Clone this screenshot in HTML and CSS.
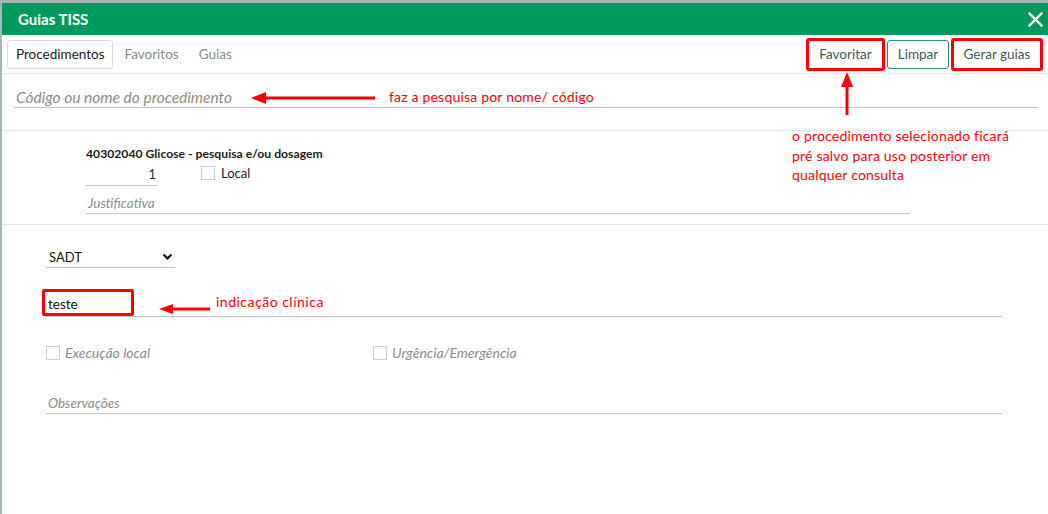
FILE: index.html
```html
<!DOCTYPE html>
<html lang="pt-BR">
<head>
    <meta charset="UTF-8">
    <title>Guias TISS</title>
    <link rel="stylesheet" href="styles.css">
</head>
<body>
    <div class="dialog">
        <div class="dialog-header">
            <span class="dialog-title">Guias TISS</span>
            <svg class="close" width="15" height="15" viewBox="0 0 15 15"><path d="M1.5 1.5 L13.5 13.5 M13.5 1.5 L1.5 13.5" stroke="#fff" stroke-width="2.4" stroke-linecap="square"/></svg>
        </div>

        <div class="toolbar">
            <div class="tabs">
                <span class="tab active">Procedimentos</span>
                <span class="tab">Favoritos</span>
                <span class="tab">Guias</span>
            </div>
            <div class="actions">
                <button class="btn marked btn-fav">Favoritar</button>
                <button class="btn btn-clear">Limpar</button>
                <button class="btn marked btn-gen">Gerar guias</button>
            </div>
        </div>

        <div class="section search">
            <div class="field"><span class="placeholder">Código ou nome do procedimento</span></div>
        </div>

        <div class="section items">
            <div class="item">
                <div class="item-name">40302040 Glicose - pesquisa e/ou dosagem</div>
                <div class="item-row">
                    <div class="qty">1</div>
                    <label class="check"><span class="box"></span>Local</label>
                </div>
                <div class="field justify"><span class="placeholder">Justificativa</span></div>
            </div>
        </div>

        <div class="guide">
            <div class="select">
                <span>SADT</span>
                <svg width="11" height="8" viewBox="0 0 11 8"><path d="M1.5 1.5 L5.5 5.5 L9.5 1.5" fill="none" stroke="#111" stroke-width="2.2"/></svg>
            </div>
            <div class="field indication">
                <span class="value">teste</span>
                <span class="mark-box"></span>
            </div>
            <div class="checks">
                <label class="check muted"><span class="box"></span>Execução local</label>
                <label class="check muted"><span class="box"></span>Urgência/Emergência</label>
            </div>
            <div class="field obs"><span class="placeholder">Observações</span></div>
        </div>
    </div>

    <svg class="arrows" width="1048" height="514" viewBox="0 0 1048 514">
        <line x1="264" y1="98" x2="375" y2="98" stroke="#f00" stroke-width="3"/>
        <polygon points="251,98 266,92 266,104" fill="#f00"/>
        <line x1="847" y1="86" x2="847" y2="115" stroke="#f00" stroke-width="3"/>
        <polygon points="847,72 841,87 853,87" fill="#f00"/>
        <line x1="172" y1="309" x2="210" y2="309" stroke="#f00" stroke-width="3"/>
        <polygon points="159,309 173,304 173,314" fill="#f00"/>
    </svg>
    <div class="note note-search">faz a pesquisa por nome/ código</div>
    <div class="note note-fav">o procedimento selecionado ficará<br>pré salvo para uso posterior em<br>qualquer consulta</div>
    <div class="note note-ind">indicação clínica</div>
</body>
</html>
```

FILE: styles.css
```css
* { box-sizing: border-box; }
body { margin: 0; background: #a3b7b4; font-family: Lato, 'Open Sans', sans-serif; color: #333; position: relative; height: 514px; overflow: hidden; }
.dialog { margin: 3px 0 0 2px; background: #fff; height: 511px; }
.dialog-header { height: 32px; background: #009a5e; display: flex; align-items: center; justify-content: space-between; padding: 0 5px 0 16px; }
.dialog-title { color: #fff; font-size: 15px; font-weight: 700; }
.close { margin-top: 1px; }

.toolbar { height: 39px; border-bottom: 1px solid #e6e6e6; display: flex; align-items: center; justify-content: space-between; padding: 0 7px 0 5px; }
.tabs { display: flex; }
.tab { font-size: 13.5px; color: #8a8a8a; padding: 5px 7px 6px; border: 1px solid transparent; border-radius: 3px; margin-right: 4px; }
.tab.active { color: #222; border-color: #dcdcdc; padding-left: 8px; }
.actions { display: flex; gap: 4px; }
.btn { font-family: inherit; font-size: 13.5px; color: #3c5c58; background: #fff; border: 1px solid #2f8a70; border-radius: 3px; height: 29px; padding: 0; }
.btn.marked { outline: 3px solid #f00; outline-offset: -1px; border-radius: 1px; }
.btn-fav { width: 75px; }
.btn-clear { width: 62px; }
.btn-gen { width: 88px; }

.section { border-bottom: 1px solid #e8e8e8; }
.field { border-bottom: 1px solid #c4c4c4; font-size: 13.5px; }
.placeholder { font-style: italic; color: #8c8c8c; }
.search { height: 57px; padding: 14px 10px 0 12px; }
.search .field { height: 20px; padding-left: 2px; line-height: 18px; font-size: 15.5px; }

.items { height: 94px; padding: 15px 0 0 84px; }
.item { width: 824px; }
.item-name { font-size: 12.2px; font-weight: 700; color: #1c1c1c; }
.item-row { display: flex; align-items: center; margin-top: 3px; }
.qty { width: 71px; text-align: right; font-size: 13px; padding: 2px 1px 3px 0; border-bottom: 1px solid #c4c4c4; }
.check { display: flex; align-items: center; font-size: 13px; color: #222; }
.box { width: 14px; height: 14px; border: 1px solid #cfcfcf; background: #fff; margin-right: 6px; }
.item-row .check { margin-left: 44px; margin-top: -4px; }
.justify { margin-top: 9px; padding: 0 0 2px 2px; }

.guide { padding: 24px 46px 0 44px; }
.select { width: 129px; display: flex; justify-content: space-between; align-items: center; border-bottom: 1px solid #c4c4c4; font-size: 13px; color: #111; padding: 0 2px 2px 3px; height: 19px; }
.indication { position: relative; margin-top: 28px; height: 21px; padding-left: 2px; color: #111; }
.mark-box { position: absolute; left: -4px; top: -7px; width: 92px; height: 27px; border: 3px solid #f00; border-radius: 2px; }
.checks { display: grid; grid-template-columns: 327px auto; margin-top: 27px; }
.check.muted { font-style: italic; color: #8a8a8a; font-size: 14px; }
.check.muted .box { margin-right: 5px; }
.obs { margin-top: 34px; padding: 0 0 2px 2px; }

.arrows { position: absolute; left: 0; top: 0; pointer-events: none; }
.note { position: absolute; color: #f00; font-size: 14px; font-family: Lato, sans-serif; line-height: 19.5px; letter-spacing: 0.2px; }
.note-search { left: 389px; top: 87px; }
.note-fav { left: 792px; top: 126px; }
.note-ind { left: 216px; top: 292px; letter-spacing: 0.5px; }
```
